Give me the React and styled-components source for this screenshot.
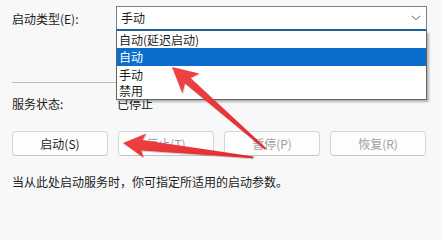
import React from "react";
import styled, { createGlobalStyle } from "styled-components";

const GlobalStyle = createGlobalStyle`
  html, body { margin: 0; padding: 0; background: #f8f8f8; }
  body { font-family: "Noto Sans CJK SC", "Noto Sans", sans-serif; font-size: 12px; color: #1b1b1b; }
`;

const Page = styled.div`
  position: relative;
  width: 442px;
  height: 204px;
  overflow: hidden;
  padding: 6px 12px 0 12px;
  box-sizing: border-box;
`;

const FieldRow = styled.div`
  display: grid;
  grid-template-columns: ${(p) => p.$labelWidth}px auto;
  align-items: center;
  height: ${(p) => p.$height}px;
  margin-top: ${(p) => p.$top || 0}px;
  line-height: 16px;
`;

const Label = styled.span`
  white-space: nowrap;
`;

const SelectWrap = styled.div`
  position: relative;
  width: 311px;
  height: 25px;
`;

const SelectBox = styled.div`
  box-sizing: border-box;
  height: 25px;
  background: #ffffff;
  border: 1px solid #6f8294;
  border-bottom: 2px solid #1f5f96;
  display: flex;
  align-items: center;
  justify-content: space-between;
  padding: 0 5px 0 4px;
`;

const Chevron = () => (
  <svg width="10" height="6" viewBox="0 0 10 6">
    <path d="M1 0.8 L5 4.8 L9 0.8" fill="none" stroke="#5a5a5a" strokeWidth="1" />
  </svg>
);

const DropList = styled.ul`
  position: absolute;
  top: 25px;
  left: 0;
  width: 311px;
  box-sizing: border-box;
  margin: 0;
  padding: 0;
  list-style: none;
  background: #ffffff;
  border: 1px solid #646464;
  border-top: none;
  box-shadow: 2px 2px 2px rgba(0, 0, 0, 0.28);
  z-index: 2;
`;

const Option = styled.li`
  height: ${(p) => p.$h}px;
  line-height: ${(p) => p.$h}px;
  padding-left: 2px;
  background: ${(p) => (p.$selected ? "#0a6fcc" : "transparent")};
  color: ${(p) => (p.$selected ? "#ffffff" : "#1b1b1b")};
`;

const Separator = styled.div`
  height: 1px;
  width: 415px;
  background: #bcbcbc;
  margin-top: 51px;
`;

const ButtonRow = styled.div`
  display: grid;
  grid-template-columns: repeat(4, 96px);
  column-gap: 10px;
  margin-top: 19px;
`;

const Button = styled.button`
  height: 25px;
  box-sizing: border-box;
  border: 1px solid #d6d6d6;
  border-bottom-color: #c4c4c4;
  border-radius: 4px;
  background: #fdfdfd;
  font-family: inherit;
  font-size: 12px;
  line-height: 16px;
  color: ${(p) => (p.disabled ? "#a0a0a0" : "#1b1b1b")};
  padding: 0;
`;

const Hint = styled.p`
  margin: 18px 0 0 0;
  line-height: 16px;
  white-space: nowrap;
`;

const ArrowLayer = styled.svg`
  position: absolute;
  left: 0;
  top: 0;
  width: 442px;
  height: 204px;
  pointer-events: none;
  z-index: 3;
`;

const options = ["自动(延迟启动)", "自动", "手动", "禁用"];
const heights = [17, 18, 17, 16];

export default function App() {
  return (
    <>
      <GlobalStyle />
      <Page>
        <FieldRow $labelWidth={104} $height={25}>
          <Label>启动类型(E):</Label>
          <SelectWrap>
            <SelectBox>
              <span>手动</span>
              <Chevron />
            </SelectBox>
            <DropList>
              {options.map((o, i) => (
                <Option key={o} $h={heights[i]} $selected={i === 1}>
                  {o}
                </Option>
              ))}
            </DropList>
          </SelectWrap>
        </FieldRow>
        <Separator />
        <FieldRow $labelWidth={105} $height={16} $top={13}>
          <Label>服务状态:</Label>
          <span>已停止</span>
        </FieldRow>
        <ButtonRow>
          <Button>启动(S)</Button>
          <Button disabled>停止(T)</Button>
          <Button disabled>暂停(P)</Button>
          <Button disabled>恢复(R)</Button>
        </ButtonRow>
        <Hint>当从此处启动服务时，你可指定所适用的启动参数。</Hint>
        <ArrowLayer viewBox="0 0 442 204">
          <defs>
            <linearGradient id="ag1" x1="0" y1="0" x2="1" y2="1">
              <stop offset="0" stopColor="#f04444" />
              <stop offset="1" stopColor="#e02a2e" />
            </linearGradient>
            <filter id="sh" x="-10%" y="-10%" width="130%" height="130%">
              <feDropShadow dx="0.6" dy="0.8" stdDeviation="0.6" floodColor="#000" floodOpacity="0.25" />
            </filter>
          </defs>
          <polygon
            filter="url(#sh)"
            fill="url(#ag1)"
            points="172,67 199.3,73.6 190.6,78 266,148 264.8,149.6 185,83.6 182.3,93.2"
          />
          <polygon
            filter="url(#sh)"
            fill="url(#ag1)"
            points="123,143 146.2,133.6 142.5,140 253.5,156.6 253,158.2 141.3,150.4 143.4,157.6"
          />
        </ArrowLayer>
      </Page>
    </>
  );
}
